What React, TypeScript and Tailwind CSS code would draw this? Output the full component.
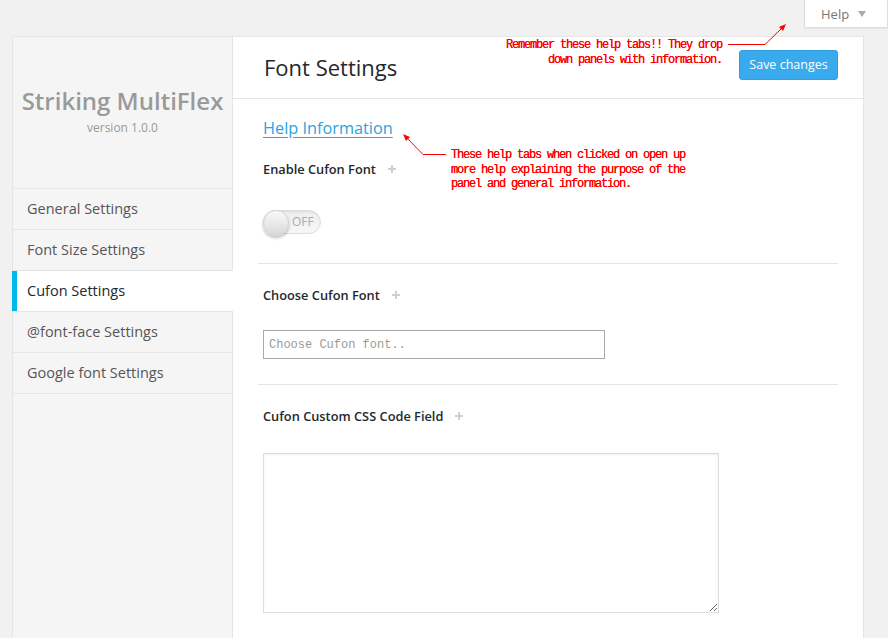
import React from "react";

function Plus() {
  return (
    <svg width="8" height="8" viewBox="0 0 8 8" className="ml-[12px] inline-block">
      <rect x="3" y="0" width="2" height="8" fill="#cfcfcf" />
      <rect x="0" y="3" width="8" height="2" fill="#cfcfcf" />
    </svg>
  );
}

function Label({ children }: { children: React.ReactNode }) {
  return (
    <div className="flex h-[20px] items-center text-[12.8px] font-semibold leading-[20px] text-[#23282d]">
      <span>{children}</span>
      <Plus />
    </div>
  );
}

const menu = [
  "General Settings",
  "Font Size Settings",
  "Cufon Settings",
  "@font-face Settings",
  "Google font Settings",
];

export default function App() {
  return (
    <div className="relative h-[638px] w-[888px] overflow-hidden bg-[#f1f1f1] font-['Open_Sans',sans-serif]">
      <div className="flex justify-end">
        <div className="flex h-[28px] w-[84px] items-center gap-[9px] border-x border-b border-[#dddddd] bg-white pl-[16px] shadow-[0_1px_1px_rgba(0,0,0,0.04)]">
          <span className="text-[13px] leading-[20px] text-[#72777c]">Help</span>
          <span className="mt-[1px] h-0 w-0 border-x-[4px] border-t-[6px] border-x-transparent border-t-[#aaaaaa]" />
        </div>
      </div>

      <div className="ml-[12px] mt-[8px] flex h-[620px] w-[852px] border border-[#e5e5e5]">
        <aside className="flex w-[220px] shrink-0 flex-col border-r border-[#e5e5e5] bg-[#f5f5f5]">
          <div className="flex h-[151px] flex-col items-center justify-center pb-[3px]">
            <div className="text-[24px] font-semibold leading-[32px] text-[#9a9a9a]">Striking MultiFlex</div>
            <div className="mt-[1px] text-[12px] leading-[20px] text-[#999999]">version 1.0.0</div>
          </div>
          <ul className="border-b border-[#e5e5e5]">
            {menu.map((m) => {
              const active = m === "Cufon Settings";
              return (
                <li
                  key={m}
                  className={
                    active
                      ? "relative -mr-px flex h-[41px] items-center border-t border-[#e5e5e5] bg-white pb-[1px] pl-[14px] text-[14.5px] text-[#23282d]"
                      : "flex h-[41px] items-center border-t border-[#e5e5e5] pb-[1px] pl-[14px] text-[14.5px] text-[#555555]"
                  }
                >
                  {active && <span className="absolute bottom-0 left-[-1px] top-0 w-[5px] bg-[#00b9eb]" />}
                  {m}
                </li>
              );
            })}
          </ul>
        </aside>

        <main className="flex-1 bg-white">
          <div className="flex h-[62px] items-start justify-between border-b border-[#e5e5e5] pl-[31px] pr-[25px] pt-[13px]">
            <h1 className="mt-[2px] text-[22px] font-normal leading-[30px] text-[#23282d]">Font Settings</h1>
            <button className="h-[30px] w-[99px] rounded-[3px] border border-[#2f9fe0] bg-[#3aaaee] text-[12.5px] leading-[20px] text-white">
              Save changes
            </button>
          </div>

          <div className="px-[25px]">
            <div className="pl-[5px]">
              <div className="mt-[17px] leading-[24px]">
                <a href="#" className="text-[16.3px] text-[#2ea2e0] underline underline-offset-[3px]">
                  Help Information
                </a>
              </div>
              <div className="mt-[19px]">
                <Label>Enable Cufon Font</Label>
              </div>
              <div className="mt-[31px]">
                <div className="relative flex h-[24px] w-[58px] items-center rounded-full border border-[#dddddd] bg-gradient-to-b from-[#eeeeee] to-[#f7f7f7] shadow-[inset_0_1px_2px_rgba(0,0,0,0.08)]">
                  <span className="absolute left-[-1px] top-[-1px] h-[26px] w-[26px] rounded-full border border-[#d4d4d4] bg-gradient-to-b from-[#fafafa] to-[#d9d9d9] shadow-[0_2px_3px_rgba(0,0,0,0.25)]" />
                  <span className="ml-[28px] text-[12px] leading-[16px] text-[#aaaaaa]">OFF</span>
                </div>
              </div>
            </div>

            <div className="mt-[29px] border-t border-[#e5e5e5]" />

            <div className="pl-[5px]">
              <div className="mt-[21px]">
                <Label>Choose Cufon Font</Label>
              </div>
              <input
                placeholder="Choose Cufon font.."
                className="mt-[25px] block h-[29px] w-[342px] border border-[#a9a9a9] px-[5px] font-['Liberation_Mono',monospace] text-[12px] text-[#555] placeholder:text-[#9a9a9a] outline-none"
              />
            </div>

            <div className="mt-[25px] border-t border-[#e5e5e5]" />

            <div className="pl-[5px]">
              <div className="mt-[21px]">
                <Label>Cufon Custom CSS Code Field</Label>
              </div>
              <textarea className="mt-[27px] block h-[160px] w-[456px] border border-[#dddddd] shadow-[inset_0_1px_2px_rgba(0,0,0,0.07)] outline-none" />
            </div>
          </div>
        </main>
      </div>

      <div className="pointer-events-none absolute left-[480px] top-[38px] w-[242px] whitespace-pre text-right font-['Liberation_Mono',monospace] text-[12px] leading-[15px] tracking-[-1.2px] text-[#ff0000] [text-shadow:0_0_0.4px_#ff0000]">
        {"Remember these help tabs!! They drop\ndown panels with information."}
      </div>
      <div className="pointer-events-none absolute left-[451px] top-[148px] whitespace-pre font-['Liberation_Mono',monospace] text-[12px] leading-[14.5px] tracking-[-1.2px] text-[#ff0000] [text-shadow:0_0_0.4px_#ff0000]">
        {"These help tabs when clicked on open up\nmore help explaining the purpose of the\npanel and general information."}
      </div>

      <svg className="pointer-events-none absolute left-0 top-0" width="888" height="638" viewBox="0 0 888 638">
        <polyline points="728,44.5 765,44.5 783,27" fill="none" stroke="#ff0000" strokeWidth="1" />
        <polygon points="786,24 779,27 783,31" fill="#ff0000" />
        <polyline points="446,154.5 423,154.5 406,137" fill="none" stroke="#ff0000" strokeWidth="1" />
        <polygon points="403,134 406,141 410,137" fill="#ff0000" />
      </svg>
    </div>
  );
}
